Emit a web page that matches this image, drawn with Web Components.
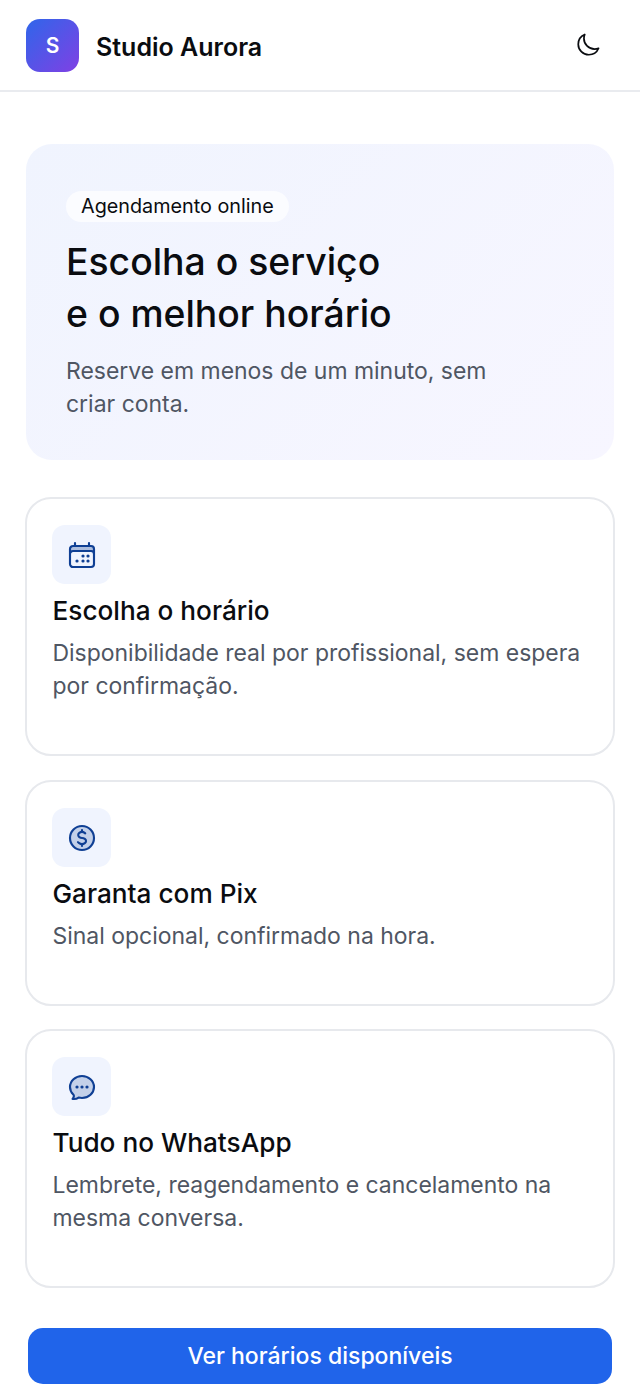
<!DOCTYPE html>
<html lang="pt-BR">
<head>
<meta charset="utf-8">
<title>Studio Aurora</title>
<style>
    html, body { margin: 0; padding: 0; background: #fff; }
    body { font-family: Inter, "Liberation Sans", sans-serif; color: #0a0c10; }
    main { display: flex; flex-direction: column; padding: 52px 25px 0; }
    feature-card { margin-top: 24px; }
    hero-panel + feature-card { margin-top: 37px; }
    feature-card:last-of-type { margin-top: 23px; }
    cta-button { margin-top: 40px; }
</style>
</head>
<body>
<app-header title="Studio Aurora"></app-header>
<main>
    <hero-panel tag="Agendamento online">
        Escolha o serviço<br>e o melhor horário
        <span slot="sub">Reserve em menos de um minuto, sem<br>criar conta.</span>
    </hero-panel>
    <feature-card icon="calendar" heading="Escolha o horário" style="height:259px">
        Disponibilidade real por profissional, sem espera<br>por confirmação.
    </feature-card>
    <feature-card icon="dollar" heading="Garanta com Pix" style="height:226px">
        Sinal opcional, confirmado na hora.
    </feature-card>
    <feature-card icon="chat" heading="Tudo no WhatsApp" style="height:259px">
        Lembrete, reagendamento e cancelamento na<br>mesma conversa.
    </feature-card>
    <cta-button>Ver horários disponíveis</cta-button>
</main>
<script>
class AppHeader extends HTMLElement {
    constructor() {
        super();
        this.attachShadow({mode: 'open'});
    }

    connectedCallback() {
        this.shadowRoot.innerHTML = `
        <style>
            :host {
                display: flex;
                align-items: center;
                justify-content: space-between;
                height: 90px;
                padding: 0 39px 0 26px;
                border-bottom: 2px solid #e9ebef;
            }
            .brand { display: flex; align-items: center; gap: 17px; padding-top: 1px; }
            .logo {
                width: 53px;
                height: 53px;
                border-radius: 14px;
                display: flex;
                align-items: center;
                justify-content: center;
                background: linear-gradient(135deg, #2f66ea, #8040e4);
                color: #fff;
                font-weight: 600;
                font-size: 21px;
            }
            .name { font-size: 25px; font-weight: 600; line-height: 30px; padding-top: 2px; color: #0a0c10; }
            svg { display: block; width: 26px; height: 26px; }
        </style>
        <div class="brand">
            <div class="logo">S</div>
            <div class="name">${this.getAttribute('title')}</div>
        </div>
        <svg viewBox="0 0 24 24" fill="none" stroke="#0a0c10" stroke-width="1.6" stroke-linecap="round" stroke-linejoin="round">
            <path d="M21.752 15.002A9.72 9.72 0 0 1 18 15.75c-5.385 0-9.75-4.365-9.75-9.75 0-1.33.266-2.597.748-3.752A9.753 9.753 0 0 0 3 11.25C3 16.635 7.365 21 12.75 21a9.753 9.753 0 0 0 9.002-5.998Z"/>
        </svg>
    `
    }
}

class HeroPanel extends HTMLElement {
    constructor() {
        super();
        this.attachShadow({mode: 'open'});
    }

    connectedCallback() {
        this.shadowRoot.innerHTML = `
        <style>
            :host {
                display: block;
                margin: 0 1px;
                height: 316px;
                box-sizing: border-box;
                padding: 47px 40px 0;
                border-radius: 26px;
                background: linear-gradient(135deg, #f0f4fe, #f7f6ff);
            }
            .tag {
                display: inline-block;
                height: 31px;
                line-height: 31px;
                padding: 0 15px;
                border-radius: 16px;
                background: #fbfcff;
                font-size: 19.8px;
                color: #0a0c10;
            }
            h1 {
                margin: 14px 0 0;
                font-size: 37.35px;
                line-height: 52px;
                font-weight: 500;
                color: #0a0c10;
            }
            .sub { margin-top: 15px; font-size: 22.96px; line-height: 33px; color: #4f5663; }
        </style>
        <div class="tag">${this.getAttribute('tag')}</div>
        <h1><slot></slot></h1>
        <div class="sub"><slot name="sub"></slot></div>
    `
    }
}

const ICONS = {
    calendar: `<path d="M3 9V7.5a2.25 2.25 0 0 1 2.25-2.25h13.5A2.25 2.25 0 0 1 21 7.5V9Z" fill="#0f3f94" fill-opacity=".3" stroke="none"/>
        <path d="M6.75 3v2.25M17.25 3v2.25M3 18.75V7.5a2.25 2.25 0 0 1 2.25-2.25h13.5A2.25 2.25 0 0 1 21 7.5v11.25m-18 0A2.25 2.25 0 0 0 5.25 21h13.5A2.25 2.25 0 0 0 21 18.75m-18 0v-7.5A2.25 2.25 0 0 1 5.25 9h13.5A2.25 2.25 0 0 1 21 11.25v7.5"/>
        <path stroke-width="2.4" d="M12.75 12.75h.01M16.5 12.75h.01M8.25 16.5h.01M12.75 16.5h.01M16.5 16.5h.01"/>`,
    dollar: `<circle cx="12" cy="12" r="9" fill="#0f3f94" fill-opacity=".2" stroke="none"/>
        <path d="M12 6v1.4M12 16.6V18M9 15.182l.879.659c1.171.879 3.07.879 4.242 0 1.172-.879 1.172-2.303 0-3.182C13.536 12.219 12.768 12 12 12c-.725 0-1.45-.22-2.003-.659-1.106-.879-1.106-2.303 0-3.182s2.9-.879 4.006 0l.415.33M21 12a9 9 0 1 1-18 0 9 9 0 0 1 18 0Z"/>`,
    chat: `<path fill="#0f3f94" fill-opacity=".2" d="M21 12c0 4.556-4.03 8.25-9 8.25a9.764 9.764 0 0 1-2.555-.337A5.972 5.972 0 0 1 5.41 20.97a5.969 5.969 0 0 1-.474-.065 4.48 4.48 0 0 0 .978-2.025c.09-.457-.133-.901-.467-1.226C3.93 16.178 3 14.189 3 12c0-4.556 4.03-8.25 9-8.25s9 3.694 9 8.25Z"/>
        <path stroke-width="2.4" d="M8.25 12h.01M12 12h.01M15.75 12h.01"/>`
};

class FeatureCard extends HTMLElement {
    constructor() {
        super();
        this.attachShadow({mode: 'open'});
    }

    connectedCallback() {
        const icon = ICONS[this.getAttribute('icon')];
        this.shadowRoot.innerHTML = `
        <style>
            :host {
                display: block;
                box-sizing: border-box;
                padding: 26px 25.5px 0;
                border: 2px solid #e7e9ed;
                border-radius: 26px;
                background: #fff;
            }
            .icon {
                width: 59px;
                height: 59px;
                margin-left: -0.5px;
                border-radius: 13px;
                background: #f0f4fe;
                display: flex;
                align-items: center;
                justify-content: center;
            }
            svg { width: 32px; height: 32px; display: block; }
            h3 { margin: 10px 0 0; font-size: 26.2px; line-height: 34px; font-weight: 500; color: #0a0c10; }
            p { margin: 9px 0 0; font-size: 22.96px; line-height: 33px; color: #4f5663; }
        </style>
        <div class="icon">
            <svg viewBox="0 0 24 24" fill="none" stroke="#0f3f94" stroke-width="1.6" stroke-linecap="round" stroke-linejoin="round">${icon}</svg>
        </div>
        <h3>${this.getAttribute('heading')}</h3>
        <p><slot></slot></p>
    `
    }
}

class CtaButton extends HTMLElement {
    constructor() {
        super();
        this.attachShadow({mode: 'open'});
    }

    connectedCallback() {
        this.shadowRoot.innerHTML = `
        <style>
            :host {
                display: flex;
                align-items: center;
                justify-content: center;
                height: 56px;
                margin-left: 3px;
                margin-right: 3px;
                border-radius: 15px;
                background: #2064ea;
                color: #fff;
                font-size: 23px;
                font-weight: 500;
            }
        </style>
        <slot></slot>
    `
    }
}

customElements.define('app-header', AppHeader);
customElements.define('hero-panel', HeroPanel);
customElements.define('feature-card', FeatureCard);
customElements.define('cta-button', CtaButton);
</script>
</body>
</html>
